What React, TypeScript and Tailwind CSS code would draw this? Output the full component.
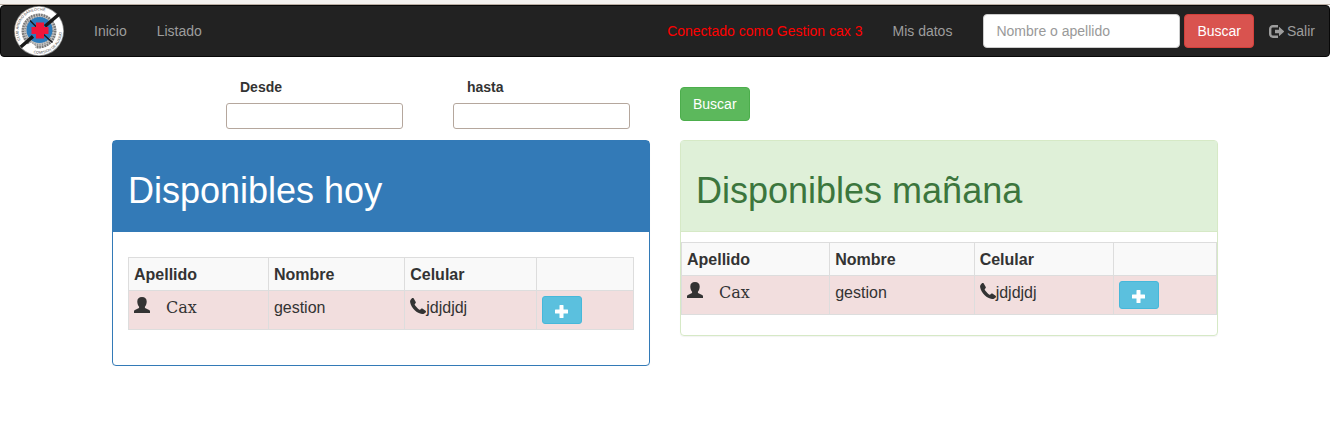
import React from 'react';

function ClubLogo() {
  return (
    <svg viewBox="0 0 50 50" className="h-[50px] w-[50px]" role="img" aria-label="Club Andino Bariloche">
      <defs>
        <path id="ring" d="M6.500 34A20.500 20.500 0 0 1 38 9.200" />
        <path id="ring-bottom" d="M19.500 47A22.700 22.700 0 0 0 46 16" />
      </defs>
      <circle cx="25" cy="25" r="25" fill="#8d8d8d" />
      <circle cx="25" cy="25" r="24.200" fill="#fff" />
      <circle cx="25" cy="25" r="17.400" fill="#c4c4c4" />
      <circle cx="25" cy="25" r="16.200" fill="none" stroke="#777" strokeWidth="2.400" strokeDasharray="1.500 1.100" />
      <circle cx="25" cy="25" r="13.800" fill="none" stroke="#8a8a8a" strokeWidth="2" strokeDasharray="1 1.500" />
      <path d="M11 40l6-3.500 5 4-2 3.500-8-1z" fill="#fff" />
      <circle cx="25.500" cy="24" r="13" fill="#2c7bbb" />
      <path d="M16 14.500l7 7M29 28l9.500 8.500" stroke="#1c1c22" strokeWidth="1.600" />
      <path d="M45.300 8L31 20.300M19 30.400L6.700 41" stroke="#1a1a1a" strokeWidth="3.400" />
      <path d="M22 16.500h8V21h4.500v7H30v4.500h-8V28h-4.500v-7H22z" fill="#f0163a" />
      <g fill="#444" fontSize="3.700" className="font-['Liberation_Sans',sans-serif]" aria-hidden="true">
        <text><textPath href="#ring">CLUB ANDINO BARILOCHE</textPath></text>
        <text><textPath href="#ring-bottom">COMISION DE AUXILIO</textPath></text>
      </g>
    </svg>
  );
}

function UserIcon() {
  return (
    <svg viewBox="0 0 16 16" className="h-4 w-4 shrink-0 fill-[#333]" aria-hidden="true">
      <path d="M8 0C5 0 3.300 1.600 3.300 4.400C3.300 6.600 4 8.500 5.100 9.800V10.400C5.100 10.900 4.900 11.100 4.500 11.300L.9 12.900C.3 13.200 0 13.600 0 14.200V16H16V14.200C16 13.600 15.700 13.200 15.100 12.900L11.500 11.300C11.100 11.100 10.900 10.900 10.900 10.400V9.800C12 8.500 12.700 6.600 12.700 4.400C12.700 1.600 11 0 8 0Z" />
    </svg>
  );
}

function PhoneIcon() {
  return (
    <svg viewBox="0 0 16 16" className="h-4 w-4 shrink-0 fill-[#333]" aria-hidden="true">
      <path d="M3.600.2C3-.1 2.300 0 1.700.4C.6 1.300 0 2.600.1 4C.5 7.200 2.500 10.200 4.700 12.300C6.900 14.300 9.500 15.800 12 16C13.500 16.100 14.800 15.400 15.700 14.400C16.100 13.900 16.100 13.200 15.600 12.800L12.700 10.700C12.200 10.300 11.500 10.400 11.100 10.800L10.100 11.800C8.900 11.800 4.700 7.500 4.600 6.200L5.500 5.200C5.900 4.800 5.900 4.200 5.600 3.700Z" />
    </svg>
  );
}

function PlusIcon() {
  return (
    <svg viewBox="0 0 13 13" className="h-[13px] w-[13px] fill-white" aria-hidden="true">
      <path d="M5 0h3a.5.5 0 0 1 .5.5v4h4a.5.5 0 0 1 .5.5v3a.5.5 0 0 1-.5.5h-4v4a.5.5 0 0 1-.5.5H5a.5.5 0 0 1-.5-.5v-4h-4A.5.5 0 0 1 0 8V5a.5.5 0 0 1 .5-.5h4v-4A.5.5 0 0 1 5 0z" />
    </svg>
  );
}

function LogOutIcon() {
  return (
    <svg viewBox="0 0 15 13" className="h-[13px] w-[15px]" aria-hidden="true">
      <path d="M9 1.200H3.900A2.700 2.700 0 0 0 1.200 3.900v5.200a2.700 2.700 0 0 0 2.700 2.700H9" fill="none" stroke="currentColor" strokeWidth="2.400" />
      <path d="M6 4.800h4V2.400c0-.4.300-.5.600-.2l4.200 3.900c.3.300.3.500 0 .8l-4.200 3.900c-.3.300-.6.200-.6-.2V8.200H6z" fill="currentColor" />
    </svg>
  );
}

const headCell = 'border border-[#ddd] px-[5px] pt-[5px] pb-[3px] text-left';
const bodyCell = 'border border-[#ddd] p-[5px] align-top';

function PeopleTable({ label }: { label: string }) {
  return (
    <table aria-label={label} className="mb-5 w-full border-collapse text-base leading-6">
      <colgroup>
        <col className="w-[27.7%]" />
        <col className="w-[27%]" />
        <col className="w-[26%]" />
        <col />
      </colgroup>
      <thead className="bg-[#f9f9f9]">
        <tr>
          <th className={headCell}>Apellido</th>
          <th className={headCell}>Nombre</th>
          <th className={headCell}>Celular</th>
          <td className={headCell} />
        </tr>
      </thead>
      <tbody className="bg-[#f2dede]">
        <tr>
          <td className={bodyCell}>
            <span className="flex gap-4 font-['DejaVu_Serif',serif]">
              <span className="pt-px"><UserIcon /></span>
              Cax
            </span>
          </td>
          <td className={bodyCell}>gestion</td>
          <td className={bodyCell}>
            <span className="flex">
              <span className="pt-[2px]"><PhoneIcon /></span>
              jdjdjdj
            </span>
          </td>
          <td className={bodyCell}>
            <button
              type="button"
              aria-label="Agregar"
              className="flex h-7 w-10 items-center justify-center rounded-[3px] border border-[#46b8da] bg-[#5bc0de] pt-[2px]"
            >
              <PlusIcon />
            </button>
          </td>
        </tr>
      </tbody>
    </table>
  );
}

function DateField({ id, label }: { id: string; label: string }) {
  return (
    <div className="w-[177px]">
      <label htmlFor={id} className="mb-[6px] block pl-[14px] font-bold">
        {label}
      </label>
      <input id={id} type="text" className="block h-[26px] w-full rounded-[3px] border border-[#b5a79d] bg-white px-2" />
    </div>
  );
}

const navLink = 'p-[15px] text-[#9d9d9d]';
const button = 'h-[34px] rounded border px-3 text-white';

export default function App() {
  return (
    <div className="bg-white font-['Liberation_Sans',Arial,sans-serif] text-sm leading-5 text-[#333]">
      <div className="h-[5px] border-b border-[#b9aca1] bg-[#f4f1ef]" />
      <nav className="flex flex-wrap items-center rounded border border-[#080808] bg-[#222] pl-[13px]">
        <a href="#" className="mr-[15px]">
          <ClubLogo />
        </a>
        <a href="#" className={navLink}>Inicio</a>
        <a href="#" className={navLink}>Listado</a>
        <span className="ml-auto p-[15px] text-[#f00]">Conectado como Gestion cax 3</span>
        <a href="#" className={navLink}>Mis datos</a>
        <form className="flex gap-1 pl-4">
          <input
            type="text"
            aria-label="Nombre o apellido"
            placeholder="Nombre o apellido"
            className="h-[34px] w-[197px] rounded border border-[#ccc] bg-white px-3 placeholder:text-[#999]"
          />
          <button type="button" className={`${button} border-[#d43f3a] bg-[#d9534f]`}>Buscar</button>
        </form>
        <a href="#" className="flex items-center gap-[3px] py-[15px] pr-[14px] pl-[15px] text-[#9d9d9d]">
          <LogOutIcon />
          Salir
        </a>
      </nav>

      <main className="mx-auto max-w-[1106px]">
        <form className="flex items-start gap-[50px] pt-5 pb-[11px] pl-[114px]">
          <DateField id="desde" label="Desde" />
          <DateField id="hasta" label="hasta" />
          <button type="button" className={`${button} mt-[10px] border-[#4cae4c] bg-[#5cb85c]`}>Buscar</button>
        </form>

        <div className="grid grid-cols-2 items-start gap-[30px]">
          <section className="rounded border border-[#337ab7] shadow-[0_1px_1px_rgba(0,0,0,0.05)]">
            <header className="border-b border-[#337ab7] bg-[#337ab7] px-[15px] pt-[30px] pb-5 text-white">
              <h1 className="text-4xl leading-10">Disponibles hoy</h1>
            </header>
            <div className="px-[15px] pt-[25px] pb-[15px]">
              <PeopleTable label="Disponibles hoy" />
            </div>
          </section>

          <section className="rounded border border-[#d6e9c6] shadow-[0_1px_1px_rgba(0,0,0,0.05)]">
            <header className="border-b border-[#d6e9c6] bg-[#dff0d8] px-[15px] pt-[30px] pb-5 text-[#3c763d]">
              <h1 className="text-4xl leading-10">Disponibles mañana</h1>
            </header>
            <div className="pt-[10px]">
              <PeopleTable label="Disponibles mañana" />
            </div>
          </section>
        </div>
      </main>
    </div>
  );
}
